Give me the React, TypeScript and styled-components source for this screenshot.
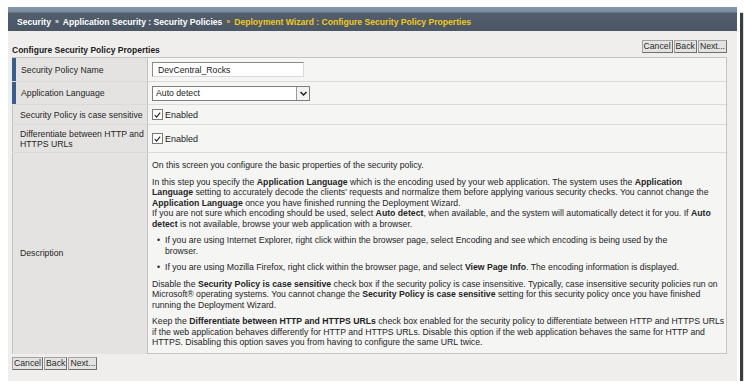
import styled, { createGlobalStyle } from 'styled-components';

const GlobalStyle = createGlobalStyle`
  html, body {
    margin: 0;
    padding: 0;
    background: #fff;
  }
  body {
    font-family: "Liberation Sans", Arial, sans-serif;
    font-size: 8.7px;
    color: #222;
  }
`;

function CheckBox() {
  return (
    <Box>
      <svg width="10" height="10" viewBox="0 0 10 10">
        <path d="M2 5.2 L4 7.3 L8 2.4" fill="none" stroke="#222" strokeWidth="1.2" />
      </svg>
    </Box>
  );
}

function App() {
  return (
    <>
      <GlobalStyle />
      <Frame>
        <Header>
          <Crumb>Security</Crumb>
          <Sep>»</Sep>
          <Crumb>Application Security : Security Policies</Crumb>
          <Sep $active>»</Sep>
          <Crumb $active>Deployment Wizard : Configure Security Policy Properties</Crumb>
        </Header>
        <Content>
          <TitleRow>
            <Title>Configure Security Policy Properties</Title>
            <ButtonGroup>
              <Button>Cancel</Button>
              <Button>Back</Button>
              <Button>Next...</Button>
            </ButtonGroup>
          </TitleRow>
          <Table>
            <Row $height={24}>
              <Label $marked>Security Policy Name</Label>
              <Value>
                <TextInput defaultValue="DevCentral_Rocks" />
              </Value>
            </Row>
            <Row $height={23}>
              <Label $marked>Application Language</Label>
              <Value>
                <Select>
                  <span>Auto detect</span>
                  <Arrow>
                    <svg width="9" height="9" viewBox="0 0 9 9">
                      <path d="M1.5 3 L4.5 6 L7.5 3" fill="none" stroke="#222" strokeWidth="1.5" />
                    </svg>
                  </Arrow>
                </Select>
              </Value>
            </Row>
            <Row $height={20}>
              <Label>Security Policy is case sensitive</Label>
              <Value>
                <CheckBox />
                <CheckText>Enabled</CheckText>
              </Value>
            </Row>
            <Row $height={28}>
              <Label>
                Differentiate between HTTP and
                <br />
                HTTPS URLs
              </Label>
              <Value>
                <CheckBox />
                <CheckText>Enabled</CheckText>
              </Value>
            </Row>
            <Row $height={200} $last>
              <Label>Description</Label>
              <Description>
                <Para>On this screen you configure the basic properties of the security policy.</Para>
                <Para>
                  In this step you specify the <b>Application Language</b> which is the encoding used by your web
                  application. The system uses the <b>Application</b>
                  <br />
                  <b>Language</b> setting to accurately decode the clients' requests and normalize them before applying
                  various security checks. You cannot change the
                  <br />
                  <b>Application Language</b> once you have finished running the Deployment Wizard.
                  <br />
                  If you are not sure which encoding should be used, select <b>Auto detect</b>, when available, and the
                  system will automatically detect it for you. If <b>Auto</b>
                  <br />
                  <b>detect</b> is not available, browse your web application with a browser.
                </Para>
                <List>
                  <Item>
                    If you are using Internet Explorer, right click within the browser page, select Encoding and see
                    which encoding is being used by the
                    <br />
                    browser.
                  </Item>
                  <Item>
                    If you are using Mozilla Firefox, right click within the browser page, and select{' '}
                    <b>View Page Info</b>. The encoding information is displayed.
                  </Item>
                </List>
                <Para>
                  Disable the <b>Security Policy is case sensitive</b> check box if the security policy is case
                  insensitive. Typically, case insensitive security policies run on
                  <br />
                  Microsoft® operating systems. You cannot change the <b>Security Policy is case sensitive</b> setting
                  for this security policy once you have finished
                  <br />
                  running the Deployment Wizard.
                </Para>
                <Para>
                  Keep the <b>Differentiate between HTTP and HTTPS URLs</b> check box enabled for the security policy
                  to differentiate between HTTP and HTTPS URLs
                  <br />
                  if the web application behaves differently for HTTP and HTTPS URLs. Disable this option if the web
                  application behaves the same for HTTP and
                  <br />
                  HTTPS. Disabling this option saves you from having to configure the same URL twice.
                </Para>
              </Description>
            </Row>
          </Table>
          <BottomBar>
            <Button>Cancel</Button>
            <Button>Back</Button>
            <Button>Next...</Button>
          </BottomBar>
        </Content>
      </Frame>
    </>
  );
}

export default App;

const Frame = styled.div`
  margin: 7px 0 0 8px;
  width: 729px;
  height: 374px;
  background: #efeeec;
  box-shadow: 3px 3px 0 #fff, 6px 6px 1px #3c3c3c;
  display: flex;
  flex-direction: column;
`;

const Header = styled.div`
  height: 24px;
  box-sizing: border-box;
  padding: 5px 0 0 9px;
  display: flex;
  align-items: center;
  gap: 4px;
  background: linear-gradient(#8596a8 0, #7b8c9f 5px, #525e6c 6px, #4a5664 100%);
  font-weight: bold;
  font-size: 8.6px;
  white-space: nowrap;
`;

const Crumb = styled.span<{ $active?: boolean }>`
  color: ${p => (p.$active ? '#f2c81e' : '#fff')};
`;

const Sep = styled.span<{ $active?: boolean }>`
  color: ${p => (p.$active ? '#e8c030' : '#e6e9ee')};
  font-size: 7px;
`;

const Content = styled.div`
  padding: 0 10px 0 4px;
  display: flex;
  flex-direction: column;
`;

const TitleRow = styled.div`
  height: 26px;
  box-sizing: border-box;
  padding-bottom: 4px;
  display: flex;
  justify-content: space-between;
  align-items: flex-end;
`;

const Title = styled.div`
  font-weight: bold;
  font-size: 8.5px;
  color: #1c1c1c;
  margin-bottom: -2px;
`;

const ButtonGroup = styled.div`
  display: flex;
  gap: 1px;
`;

const Button = styled.button`
  margin: 0;
  height: 13px;
  padding: 0 1px;
  font-family: inherit;
  font-size: 8.7px;
  line-height: 11px;
  color: #2a2a2a;
  background: #e3e3e2;
  border: 1px solid;
  border-color: #a3a3a3 #6f6f6f #6f6f6f #a3a3a3;
`;

const Table = styled.div`
  border: 1px solid #c4c4c4;
  border-left: 0;
  background: #f5f5f4;
  display: flex;
  flex-direction: column;
`;

const Row = styled.div<{ $height: number; $last?: boolean }>`
  height: ${p => p.$height}px;
  flex: none;
  box-sizing: border-box;
  display: grid;
  grid-template-columns: 136px 1fr;
  border-bottom: ${p => (p.$last ? '0' : '1px solid #dadad8')};
`;

const Label = styled.div<{ $marked?: boolean }>`
  display: flex;
  align-items: center;
  background: #e4e3e1;
  border-right: 1px solid #c2c2c2;
  border-left: ${p => (p.$marked ? '4px solid #3a5d8b' : '1px solid #c4c4c4')};
  padding-left: ${p => (p.$marked ? '5px' : '7px')};
  line-height: 10px;
  color: #262626;
`;

const Value = styled.div`
  display: flex;
  align-items: center;
  padding-left: 4px;
`;

const TextInput = styled.input`
  width: 152px;
  height: 15px;
  box-sizing: border-box;
  margin: 0;
  padding: 0 5px;
  font-family: inherit;
  font-size: 8.7px;
  color: #222;
  background: #fff;
  border: 1px solid;
  border-color: #8a8a8a #d8d8d8 #d8d8d8 #8a8a8a;
  outline: none;
`;

const Select = styled.div`
  width: 158px;
  height: 15px;
  box-sizing: border-box;
  display: flex;
  align-items: center;
  justify-content: space-between;
  padding-left: 3px;
  background: #fff;
  border: 1px solid #7d7d7d;
  color: #222;
`;

const Arrow = styled.div`
  width: 13px;
  height: 13px;
  box-sizing: border-box;
  display: flex;
  align-items: center;
  justify-content: center;
  border-left: 1px solid #9a9a9a;
  background: #f3f3f3;
`;

const Box = styled.span`
  width: 11px;
  height: 11px;
  box-sizing: border-box;
  display: flex;
  align-items: center;
  justify-content: center;
  background: #fff;
  border: 1px solid #7a7a7a;
`;

const CheckText = styled.span`
  margin-left: 2px;
  font-size: 9px;
  color: #222;
`;

const Description = styled.div`
  padding: 7px 6px 0 4px;
  line-height: 10.5px;
  color: #242424;
  white-space: nowrap;
`;

const Para = styled.p`
  margin: 0 0 6px;
`;

const List = styled.ul`
  margin: 0 0 6px;
  padding-left: 13px;
  list-style: none;
`;

const Item = styled.li`
  margin-bottom: 6px;

  &::before {
    content: '•';
    display: inline-block;
    width: 8px;
    margin-left: -8px;
  }

  &:last-child {
    margin-bottom: 0;
  }
`;

const BottomBar = styled.div`
  margin-top: 3px;
  display: flex;
  gap: 1px;
`;
